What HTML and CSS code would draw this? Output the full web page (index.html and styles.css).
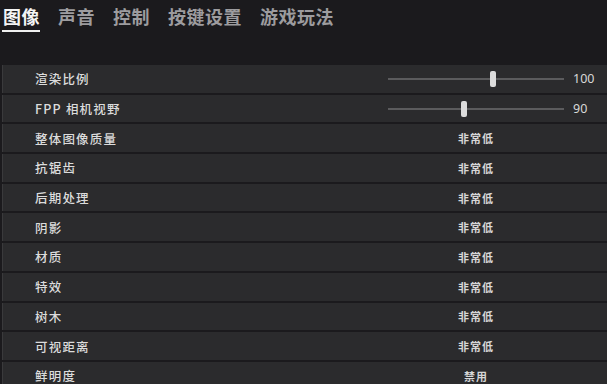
FILE: index.html
```html
<!DOCTYPE html>
<html lang="zh">
<head>
<meta charset="utf-8">
<title>图像设置</title>
<link rel="stylesheet" href="styles.css">
</head>
<body>
<header class="tabs">
  <span class="tab active">图像</span>
  <span class="tab">声音</span>
  <span class="tab">控制</span>
  <span class="tab">按键设置</span>
  <span class="tab">游戏玩法</span>
</header>
<main class="list">
  <div class="row">
    <span class="label">渲染比例</span>
    <div class="slider"><span class="track"></span><span class="thumb" style="left:59.7%"></span></div>
    <span class="num">100</span>
  </div>
  <div class="row">
    <span class="label">FPP 相机视野</span>
    <div class="slider"><span class="track"></span><span class="thumb" style="left:43.2%"></span></div>
    <span class="num">90</span>
  </div>
  <div class="row"><span class="label">整体图像质量</span><span class="value">非常低</span></div>
  <div class="row"><span class="label">抗锯齿</span><span class="value">非常低</span></div>
  <div class="row"><span class="label">后期处理</span><span class="value">非常低</span></div>
  <div class="row"><span class="label">阴影</span><span class="value">非常低</span></div>
  <div class="row"><span class="label">材质</span><span class="value">非常低</span></div>
  <div class="row"><span class="label">特效</span><span class="value">非常低</span></div>
  <div class="row"><span class="label">树木</span><span class="value">非常低</span></div>
  <div class="row"><span class="label">可视距离</span><span class="value">非常低</span></div>
  <div class="row"><span class="label">鲜明度</span><span class="value">禁用</span></div>
</main>
</body>
</html>
```
FILE: styles.css
```css
html, body {
  margin: 0;
  padding: 0;
  background: #1b1a1d;
  overflow: hidden;
  font-family: "Noto Sans CJK SC", "Noto Sans", sans-serif;
}

.tabs {
  height: 65px;
  box-sizing: border-box;
  display: flex;
  align-items: flex-start;
  gap: 18px;
  padding: 3px 0 0 3px;
  background: #1b1a1d;
}

.tab {
  position: relative;
  font-size: 18px;
  line-height: 26px;
  font-weight: 700;
  color: #9d9c9f;
  letter-spacing: 0.5px;
}

.tab.active {
  color: #f4f4f4;
}

.tab.active::after {
  content: "";
  position: absolute;
  left: -1px;
  right: 0;
  top: 27px;
  height: 2px;
  background: #f0f0f0;
}

.list {
  display: flex;
  flex-direction: column;
  gap: 2px;
  margin-left: 2px;
}

.row {
  height: 27.7px;
  display: grid;
  grid-template-columns: 385px 176px 1fr;
  align-items: center;
  background: #2b2b2d;
  border-left: 1px solid #3a3a3c;
}

.label {
  padding-left: 32px;
  font-size: 12.5px;
  font-weight: 500;
  color: #dcdcdc;
  letter-spacing: 1.2px;
}

.value {
  text-align: center;
  font-size: 11px;
  font-weight: 700;
  color: #d6d6d6;
  letter-spacing: 1px;
}

.slider {
  position: relative;
  height: 16px;
}

.track {
  position: absolute;
  left: 0;
  right: 0;
  top: 7px;
  height: 2px;
  background: #5b5b5d;
}

.thumb {
  position: absolute;
  top: 0;
  width: 6px;
  height: 16px;
  margin-left: -3px;
  border-radius: 2px;
  background: #dcdcdc;
}

.num {
  padding-left: 9px;
  font-size: 12.5px;
  color: #d8d8d8;
  font-family: "Noto Sans", sans-serif;
}
```
